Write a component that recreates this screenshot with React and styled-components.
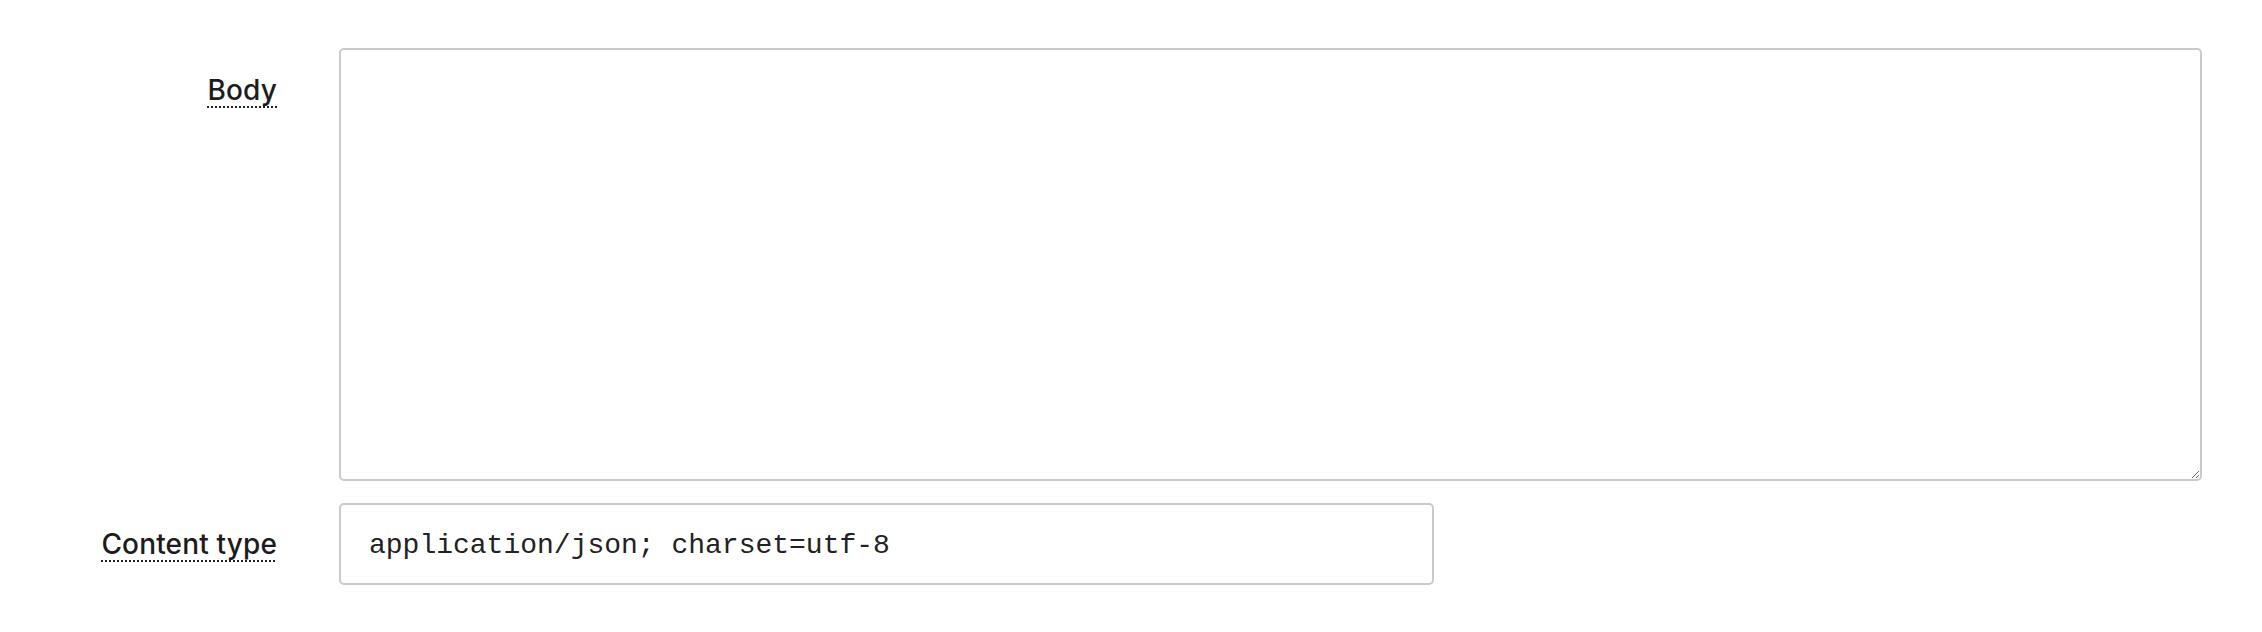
import styled, { createGlobalStyle } from "styled-components";

const GlobalStyle = createGlobalStyle`
  body {
    margin: 0;
    background: #ffffff;
    font-family: Inter, "Liberation Sans", sans-serif;
    color: #1c1c1c;
  }
`;

const App = () => {
  return (
    <>
      <GlobalStyle />
      <Form>
        <Row>
          <LabelCell top="25px">
            <Label htmlFor="body">Body</Label>
          </LabelCell>
          <TextArea id="body" spellCheck={false} />
        </Row>
        <Row>
          <LabelCell top="24px">
            <Label htmlFor="content-type">Content type</Label>
          </LabelCell>
          <Input
            id="content-type"
            defaultValue="application/json; charset=utf-8"
            spellCheck={false}
          />
        </Row>
      </Form>
    </>
  );
};

const Form = styled.form`
  padding: 48px 60px 0 0;

  display: flex;
  flex-direction: column;
  gap: 22px;
`;

const Row = styled.div`
  display: grid;
  grid-template-columns: 277px 1fr;
  column-gap: 62px;
  align-items: start;
`;

const LabelCell = styled.div`
  padding-top: ${(props) => props.top};
  text-align: right;
`;

const Label = styled.label`
  font-size: 28px;
  font-weight: 500;
  letter-spacing: 0.15px;

  text-decoration: underline dotted #222;
  text-decoration-thickness: 2px;
  text-underline-offset: 6px;
`;

const fieldBase = `
  box-sizing: border-box;
  border: 2px solid #cacaca;
  border-radius: 5px;
  background: #ffffff;
  outline: none;
  color: #222222;
`;

const TextArea = styled.textarea`
  ${fieldBase}
  width: 100%;
  height: 433px;
  display: block;
  resize: vertical;
`;

const Input = styled.input`
  ${fieldBase}
  width: 1095px;
  height: 82px;
  padding: 2px 28px 0;

  font-family: "Liberation Mono", "Courier New", monospace;
  font-size: 28px;
`;

export default App;
